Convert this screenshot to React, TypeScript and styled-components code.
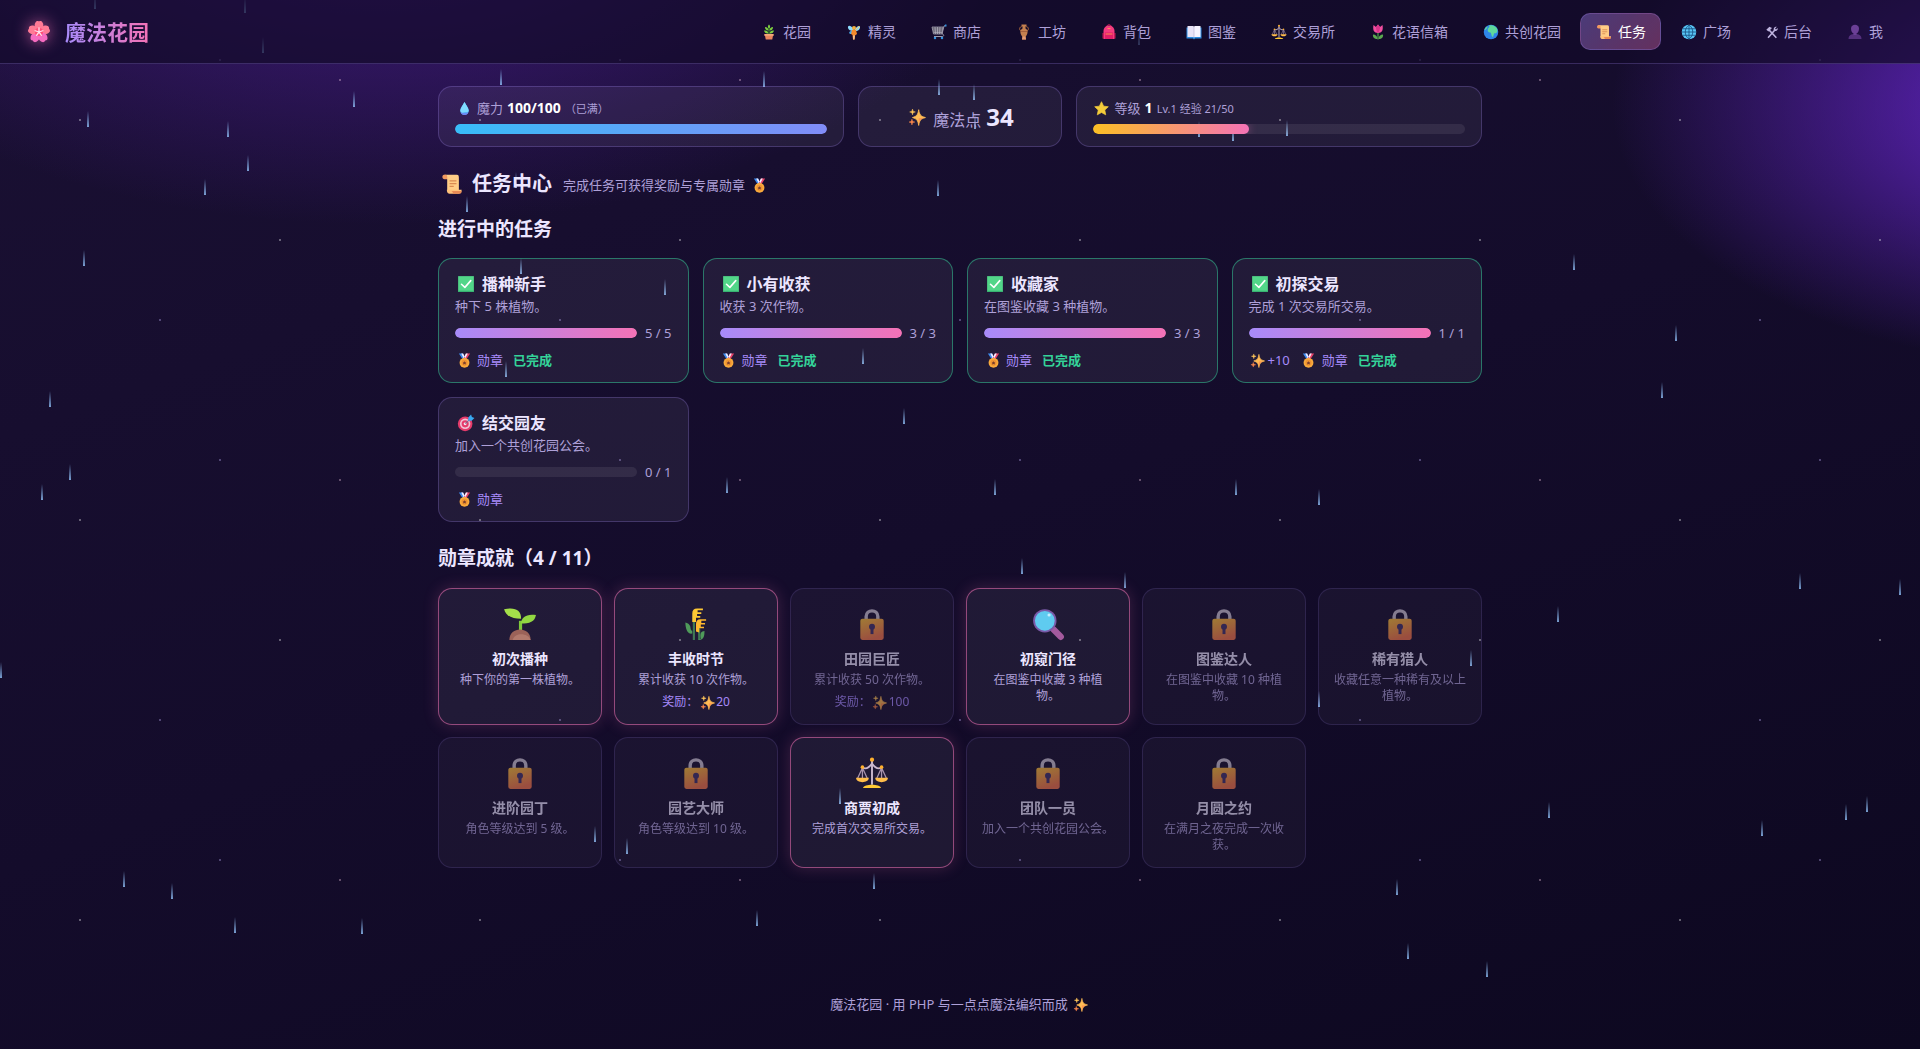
import React from "react";
import styled, { createGlobalStyle, css } from "styled-components";

const GlobalStyle = createGlobalStyle`
  *, *::before, *::after { box-sizing: border-box; }
  body {
    margin: 0;
    background: #120b28;
    color: #ece6ff;
    font-family: "Noto Sans", "Open Sans", "Noto Sans CJK SC", sans-serif;
    font-size: 13px;
    line-height: 18px;
  }
  h1, h2, h3, h4, p, ul { margin: 0; padding: 0; }
  ul { list-style: none; }
  a { color: inherit; text-decoration: none; }
`;

/* ---------- icons ---------- */

type IconName =
  | "blossom" | "plant" | "fairy" | "cart" | "amphora" | "backpack" | "book"
  | "scales" | "tulip" | "earth" | "scroll" | "mesh" | "tools" | "bust"
  | "drop" | "sparkles" | "star" | "medal" | "check" | "target"
  | "seedling" | "rice" | "lock" | "magnifier";

const petals = [0, 72, 144, 216, 288];

const art: Record<IconName, React.ReactNode> = {
  blossom: (
    <>
      {petals.map((a) => (
        <path
          key={a}
          transform={`rotate(${a} 16 16)`}
          d="M16 16C11 13 9.500 8 11.500 4.500C12.500 2.500 14 2 16 3C18 2 19.500 2.500 20.500 4.500C22.500 8 21 13 16 16Z"
          fill={a === 144 || a === 216 ? "#f56bc0" : "#ff7a95"}
        />
      ))}
      <circle cx="16" cy="16" r="5" fill="#ff4f78" />
      {petals.map((a) => (
        <path key={a} transform={`rotate(${a} 16 16)`} d="M16 16V11" stroke="#ffe1ee" strokeWidth="1.600" strokeLinecap="round" />
      ))}
    </>
  ),
  plant: (
    <>
      <path d="M16 21V8" stroke="#3f8f2e" strokeWidth="2" />
      <path d="M16 9C13 7 13 4 16 1C19 4 19 7 16 9ZM15 13C10 13 8 10 8 6C12 6 15 9 15 13ZM17 13C22 13 24 10 24 6C20 6 17 9 17 13ZM15 19C10 20 7 17 6 13C11 12 14 14 15 19ZM17 19C22 20 25 17 26 13C21 12 18 14 17 19Z" fill="#7ccf3f" />
      <path d="M7 20H25V23.500H24L22.500 31H9.500L8 23.500H7Z" fill="#e8875f" />
      <path d="M7 20H25V23.500H7Z" fill="#f5a77b" />
    </>
  ),
  fairy: (
    <>
      <path d="M15 10C9 1 3 2 4 8C5 12 9 14 14 14ZM18 10C24 1 29 3 28 8C27 13 22 14 18 14Z" fill="#8ddcff" />
      <path d="M12 14C6 14 5 18 8 20C11 21 13 18 14 16Z" fill="#4aa7e8" />
      <circle cx="16" cy="8" r="4" fill="#f6b13f" />
      <path d="M12 12H20L22 20L18 23L17 31H14L13 22L10 20Z" fill="#f58a2c" />
      <path d="M20 12L27 4" stroke="#ffc65a" strokeWidth="2" />
      <path d="M14 23H18L17 31H14Z" fill="#f2c08e" />
    </>
  ),
  cart: (
    <>
      <path d="M2 6H24L22 20H5Z" fill="#4b4758" stroke="#aaa7b5" strokeWidth="1.500" />
      <path d="M3 10H24M4 14H23M5 17H22M8 6L9 20M13 6V20M18 6L17 20" stroke="#bdbac8" strokeWidth="1.300" />
      <path d="M30 3L26 4L22 20C26 20 27 25 22 25H6" fill="none" stroke="#9d9aab" strokeWidth="2" />
      <path d="M28 1H31V5H27Z" fill="#3292df" />
      <circle cx="8" cy="28" r="2.500" fill="#3292df" />
      <circle cx="22" cy="28" r="2.500" fill="#3292df" />
    </>
  ),
  amphora: (
    <>
      <path d="M13 5C6 5 6 12 10 14M19 5C26 5 26 12 22 14" fill="none" stroke="#b26b3c" strokeWidth="2" />
      <path d="M11 1H21V4H19V9C25 12 24 20 19 26L20 31H12L13 26C8 20 7 12 13 9V4H11Z" fill="#c4804f" />
      <path d="M9 14H23V15.500H9Z" fill="#9a5637" />
      <path d="M13 25H19L20 31H12Z" fill="#e39a73" />
    </>
  ),
  backpack: (
    <>
      <path d="M12 5C12 0 20 0 20 5" fill="none" stroke="#c21a57" strokeWidth="2" />
      <path d="M5 30V14C5 -1 27 -1 27 14V30Z" fill="#f43b7f" />
      <path d="M3 18H6V29H3ZM26 18H29V29H26Z" fill="#c21a57" />
      <path d="M8 17H24V30H8Z" fill="#e01e68" />
      <path d="M9 20H23M13 9H19" stroke="#ff8e57" strokeWidth="2" />
    </>
  ),
  book: (
    <>
      <path d="M1 7H31V29H18L16 31L14 29H1Z" fill="#2c8ce0" />
      <path d="M3 4H13C15 4 16 5 16 6V27C15 26 14 26 13 26H3Z" fill="#e9e4f7" />
      <path d="M29 4H19C17 4 16 5 16 6V27C17 26 18 26 19 26H29Z" fill="#f7f4ff" />
      <path d="M16 6V27" stroke="#b5adce" strokeWidth="1.200" />
    </>
  ),
  scales: (
    <>
      <path d="M16 4V27M7 11C11 13 14 10 16 7C18 10 21 13 25 11" fill="none" stroke="#cbb9cf" strokeWidth="1.800" />
      <path d="M7 11L2.500 21M7 11V21M7 11L11.500 21M25 11L20.500 21M25 11V21M25 11L29.500 21" stroke="#a893ad" strokeWidth="1.200" />
      <path d="M1 20.500H13C13 26 1 26 1 20.500ZM19 20.500H31C31 26 19 26 19 20.500Z" fill="#ffbd4a" />
      <path d="M7.500 30C8.500 26 23.500 26 24.500 30Z" fill="#ffc933" />
      <circle cx="16" cy="3.500" r="2" fill="#ffb02e" />
      <circle cx="7" cy="10.500" r="1.700" fill="#ffb02e" />
      <circle cx="25" cy="10.500" r="1.700" fill="#ffb02e" />
    </>
  ),
  tulip: (
    <>
      <path d="M16 16V31" stroke="#4c9a4a" strokeWidth="2.500" />
      <path d="M15 30C8 30 5 26 6 21C11 21 15 24 15 30ZM17 30C24 30 27 26 26 21C21 21 17 24 17 30Z" fill="#5aa84f" />
      <path d="M7 2L12 6L16 1L20 6L25 2C27 12 24 18 16 18C8 18 5 12 7 2Z" fill="#f04fa0" />
      <path d="M12 6L16 1L20 6C20 12 18 16 16 18C14 16 12 12 12 6Z" fill="#d9338a" />
    </>
  ),
  earth: (
    <>
      <circle cx="16" cy="16" r="14.500" fill="#2f86e8" />
      <path d="M12 3C18 1 25 4 28 9C30 14 28 18 25 19C22 16 22 22 20 26C17 26 17 20 15 17C11 17 8 14 10 9C12 7 14 6 12 3Z" fill="#5fd99b" />
      <path d="M4 9C6 6 8 5 9 5C9 8 6 12 3 12Z" fill="#5fd99b" />
    </>
  ),
  scroll: (
    <>
      <path d="M2 5.500C2 1 10 1 10 6V9H5C3 9 2 7.500 2 5.500Z" fill="#f29a5f" />
      <path d="M6 2.500H23C26 2.500 26 5 26 8V26H9V7C9 5 9 2.500 6 2.500Z" fill="#ffcd86" />
      <path d="M12 24.500H30C30 28 29 30 26 30H12C9 30 8.500 27 8.500 24.500Z" fill="#ffc27a" />
      <path d="M15 26H30C30 29 29 30 26 30H17C18 29 17 27 15 26Z" fill="#e88a55" />
      <path d="M12.500 11.500H22.500M12.500 15.500H22.500M12.500 19.500H18.500" stroke="#d98a52" strokeWidth="1.700" />
    </>
  ),
  mesh: (
    <>
      <circle cx="16" cy="16" r="14.500" fill="#58c5f5" />
      <path d="M2 16H30M4 9.500H28M4 22.500H28M16 2V30M16 2C6 9 6 23 16 30M16 2C26 9 26 23 16 30" fill="none" stroke="#164b7d" strokeWidth="1.600" />
    </>
  ),
  tools: (
    <>
      <path d="M8 10L26 29" stroke="#bfb4e0" strokeWidth="3.500" />
      <path d="M3 11L10 4L16 7L8 15Z" fill="#bfb4e0" />
      <path d="M7 29L22 12" stroke="#bfb4e0" strokeWidth="3.500" />
      <path d="M27 4L23 8L25 10L29 7C30 12 26 15 21 13C18 9 21 3 27 4Z" fill="#bfb4e0" />
    </>
  ),
  bust: (
    <>
      <path d="M3 30C3 22 9 20 16 20C23 20 29 22 29 30Z" fill="#54307d" />
      <path d="M8 9C8 -1 24 -1 24 9C24 15 21 18 19 19V22H13V19C11 18 8 15 8 9Z" fill="#6b3f96" />
    </>
  ),
  drop: (
    <>
      <path d="M16 2C20 10 25 15 25 21C25 33 7 33 7 21C7 15 12 10 16 2Z" fill="#55b4f7" />
      <path d="M16 2C20 10 25 15 25 21C25 25 20 22 15 24C11 26 8 25 7 21C7 15 12 10 16 2Z" fill="#7fdcff" />
      <path d="M8 24C13 27 20 27 24 24C22 32 10 32 8 24Z" fill="#6f86f2" />
    </>
  ),
  sparkles: (
    <>
      <path d="M19 3C20.500 12 22 14.500 31 17C22 19.500 20.500 22 19 31C17.500 22 16 19.500 8 17C16 14.500 17.500 12 19 3Z" fill="#ffbc55" stroke="#ffbc55" strokeWidth="1.500" strokeLinejoin="round" />
      <path d="M19 18L29 17.500C22 19.500 20.500 22 19 31Z" fill="#ff9450" />
      <path d="M8 2C8.600 5.500 9.500 6.400 13 7C9.500 7.600 8.600 8.500 8 12C7.400 8.500 6.500 7.600 3 7C6.500 6.400 7.400 5.500 8 2Z" fill="#ffc65a" stroke="#ffc65a" />
      <path d="M7 20C7.600 23.500 8.500 24.400 12 25C8.500 25.600 7.600 26.500 7 30C6.400 26.500 5.500 25.600 2 25C5.500 24.400 6.400 23.500 7 20Z" fill="#ff8a4d" stroke="#ff8a4d" />
    </>
  ),
  star: (
    <path d="M16 1.500L20.500 11L30.500 12.200L23 19.300L25 29.500L16 24.500L7 29.500L9 19.300L1.500 12.200L11.500 11Z" fill="#f4cc3a" stroke="#f4cc3a" strokeWidth="1.500" strokeLinejoin="round" />
  ),
  medal: (
    <>
      <path d="M4 1H13L18 12L13 15Z" fill="#3f8df0" />
      <path d="M28 1H19L14 12L19 15Z" fill="#e8436b" />
      <path d="M9 1H13L18 11L15 13ZM23 1H19L15 9L17 13Z" fill="#f3ecff" />
      <circle cx="16" cy="21" r="10.500" fill="#f9aa3c" />
      <circle cx="16" cy="21" r="6.500" fill="#ee9232" />
      <path d="M16 17.500L17.500 19.500L19.500 20L18.500 22L19 24.500L16 23.500L13 24.500L13.500 22L12.500 20L14.500 19.500Z" fill="#7b3f2c" />
    </>
  ),
  check: (
    <>
      <path d="M2 2H30V30H2Z" fill="#52d689" />
      <path d="M2 28H30V30H2Z" fill="#36b070" />
      <path d="M8 16.500L14 22L24.500 10" fill="none" stroke="#fff" strokeWidth="2.800" strokeLinecap="round" strokeLinejoin="round" />
    </>
  ),
  target: (
    <>
      <circle cx="14.500" cy="17.500" r="13" fill="#e63b6b" />
      <circle cx="14.500" cy="17.500" r="9.300" fill="#f0c4d6" />
      <circle cx="14.500" cy="17.500" r="6.300" fill="#e63b6b" />
      <circle cx="14.500" cy="17.500" r="2.600" fill="#f3e6f2" />
      <path d="M15 17L24 8" stroke="#7a6a8c" strokeWidth="1.800" />
      <path d="M20 11V6L25 1L26.500 5.500L31 7L26 12H21Z" fill="#38a8f0" />
    </>
  ),
  seedling: (
    <>
      <path d="M15 27V13H18V27Z" fill="#7fc93a" />
      <path d="M1 2C12 0 17 3 17 11C9 11 3 9 1 2Z" fill="#a4e04a" />
      <path d="M31 7.500C22 6 17 10 17 15.500C25 15.500 30 14 31 7.500Z" fill="#92d742" />
      <path d="M6 31C6 18 26 18 26 31Z" fill="#9b6259" />
      <path d="M9 31C12 23 24 25 26 31Z" fill="#b1796d" />
    </>
  ),
  rice: (
    <>
      <path d="M14 31V9M19 31V20" stroke="#3f7a55" strokeWidth="2" />
      <path d="M12.500 25C8 26 6 20 6 14.500C10 15.500 11 18 11 21L12.500 23ZM20.500 30C19.500 24 21 23 24 22.500C24 28 23 31 18 31Z" fill="#4f9a5a" />
      <path d="M12.500 14V6C12.500 3 14 1.500 17 1.500H22.500V3H17.500V5H21V6.500H17V8.500H20V10H16V14Z" fill="#ffc934" />
      <path d="M16 23V16C16 13 17.500 11.500 20 11.500H25.500V13H21V15H24.500V16.500H20.500V18.500H23.500V20H19V24Z" fill="#ffb92e" />
    </>
  ),
  lock: (
    <>
      <path d="M10.500 13V9C10.500 1.800 21.500 1.800 21.500 9V13" fill="none" stroke="#d0c8d6" strokeWidth="3.200" />
      <rect x="5" y="11" width="22" height="20" rx="2" fill="url(#lockBody)" />
      <circle cx="16" cy="18.500" r="2.800" fill="#4a3a6e" />
      <path d="M14.600 19H17.400V25.500H14.600Z" fill="#4a3a6e" />
    </>
  ),
  magnifier: (
    <>
      <path d="M21 21L28 28" stroke="#a45a9e" strokeWidth="6" strokeLinecap="round" />
      <circle cx="13" cy="13" r="11" fill="#7a5aa8" />
      <circle cx="13" cy="13" r="9.300" fill="#5fcbf0" />
      <circle cx="17" cy="7.500" r="1.500" fill="#c6efff" />
    </>
  ),
};

const IconSlot = styled.span<{ $slot: number }>`
  display: inline-flex;
  flex: none;
  justify-content: center;
  align-items: center;
  width: ${(p) => p.$slot}px;
  svg { display: block; overflow: visible; }
`;

function Icon({ name, size, slot }: { name: IconName; size: number; slot: number }) {
  return (
    <IconSlot $slot={slot} aria-hidden="true">
      <svg width={size} height={size} viewBox="0 0 32 32">{art[name]}</svg>
    </IconSlot>
  );
}

/* ---------- page backdrop ---------- */

const Page = styled.div`
  position: relative;
  isolation: isolate;
  display: flex;
  flex-direction: column;
  min-height: 100vh;
  background:
    radial-gradient(500px 265px at 110% 10%, #6d28d9, rgba(109, 40, 217, 0) 100%),
    radial-gradient(640px 330px at 20% -10%, rgba(76, 29, 149, 0.85), rgba(76, 29, 149, 0) 100%),
    linear-gradient(160deg, #1a1033 0%, #140c2b 50%, #0d0820 100%);
`;

const Sky = styled.div`
  position: absolute;
  inset: 0;
  z-index: -1;
  overflow: hidden;
  pointer-events: none;
`;

const dot = (x: number, y: number, color: string) =>
  `radial-gradient(circle at ${x}px ${y}px, ${color} 1px, transparent 1px)`;

const Stars = styled.div`
  position: absolute;
  inset: 0 0 20px;
  opacity: 0.34;
  background-image:
    ${dot(80, 120, "#ffffff")},
    ${dot(160, 320, "#c4b5fd")},
    ${dot(220, 60, "#c4b5fd")},
    ${dot(280, 240, "#ffffff")},
    ${dot(340, 80, "#fbcfe8")};
  background-size: 400px 400px;
`;

const Drop = styled.i`
  position: absolute;
  width: 2px;
  height: 16px;
  background: linear-gradient(to bottom, rgba(147, 197, 253, 0), rgba(147, 197, 253, 0.8));
`;

const drops: [number, number][] = [
  [94, -7], [244, -3], [262, 37], [353, 91], [500, 69], [87, 111], [227, 121], [247, 155],
  [204, 179], [466, 196], [763, 71], [938, 79], [973, 84], [974, 113], [937, 180], [1198, 121],
  [1232, 125], [1286, 120], [1138, 29], [515, 172], [83, 250], [520, 258], [664, 279], [862, 348], [505, 361],
  [49, 391], [903, 408], [69, 464], [41, 484], [726, 477], [994, 479], [1235, 479], [1318, 489],
  [1573, 254], [1675, 325], [1661, 382], [1021, 558], [1124, 572], [1799, 573], [1899, 579],
  [1557, 606], [0, 662], [1470, 650], [1318, 691], [839, 788], [594, 826], [626, 838], [873, 873],
  [123, 871], [171, 883], [234, 917], [361, 918], [756, 910], [1548, 802], [1396, 879],
  [1407, 943], [1486, 961], [1761, 820], [1845, 804], [1866, 796],
];

/* ---------- header ---------- */

const Header = styled.header`
  display: flex;
  align-items: center;
  justify-content: space-between;
  height: 64px;
  padding: 0 22px;
  background: rgba(18, 10, 42, 0.7);
  border-bottom: 1px solid rgba(167, 139, 250, 0.25);
`;

const Brand = styled.a`
  display: flex;
  align-items: center;
  gap: 10px;
  font-size: 21px;
  line-height: 30px;
  font-weight: 700;
  svg { filter: drop-shadow(0 0 8px rgba(244, 114, 182, 0.7)); }
`;

const BrandName = styled.span`
  background: linear-gradient(90deg, #a78bfa, #f472b6);
  background-clip: text;
  -webkit-background-clip: text;
  color: transparent;
`;

const Nav = styled.nav`
  display: flex;
  gap: 4px;
`;

const NavLink = styled.a<{ $active?: boolean }>`
  display: flex;
  align-items: center;
  gap: 5px;
  height: 37px;
  padding: 0 14px;
  border: 1px solid transparent;
  border-radius: 10px;
  color: #aea0d8;
  font-size: 14px;
  white-space: nowrap;
  ${(p) =>
    p.$active &&
    css`
      color: #ffffff;
      border-color: rgba(167, 139, 250, 0.25);
      background: linear-gradient(135deg, rgba(167, 139, 250, 0.38), rgba(244, 114, 182, 0.36));
    `}
`;

/* ---------- shared pieces ---------- */

const Main = styled.main`
  width: 100%;
  max-width: 1100px;
  margin: 0 auto;
  padding: 22px 28px 0;
`;

const panel = css`
  background: rgba(255, 255, 255, 0.06);
  border: 1px solid rgba(167, 139, 250, 0.25);
  border-radius: 14px;
`;

const Track = styled.div`
  flex: 1;
  height: 10px;
  border-radius: 5px;
  overflow: hidden;
  background: rgba(255, 255, 255, 0.08);
`;

const fills = {
  mana: "linear-gradient(90deg, #38bdf8, #818cf8)",
  xp: "linear-gradient(90deg, #fbbf24, #f472b6)",
  task: "linear-gradient(90deg, #a78bfa, #f472b6)",
};

const Fill = styled.div<{ $tone: keyof typeof fills }>`
  height: 100%;
  border-radius: 5px;
  background: ${(p) => fills[p.$tone]};
  box-shadow: 0 0 10px rgba(244, 114, 182, 0.4);
`;

function Bar({ value, max, tone, label }: { value: number; max: number; tone: keyof typeof fills; label: string }) {
  return (
    <Track role="progressbar" aria-label={label} aria-valuenow={value} aria-valuemax={max}>
      {value > 0 && <Fill $tone={tone} style={{ width: `${(value / max) * 100}%` }} />}
    </Track>
  );
}

/* ---------- stats ---------- */

const Stats = styled.section`
  display: grid;
  grid-template-columns: 2fr 1fr 2fr;
  gap: 14px;
`;

const Stat = styled.div`
  ${panel}
  padding: 12px 16px;
`;

const StatLine = styled.div`
  display: flex;
  align-items: baseline;
  gap: 4px;
  height: 18px;
  margin-bottom: 7px;
  color: #aea0d8;
  ${IconSlot} { align-self: center; }
  strong { color: #ffffff; font-size: 14px; }
  small { font-size: 11px; }
`;

const Points = styled(Stat)`
  display: flex;
  align-items: center;
  justify-content: center;
`;

const PointsLine = styled.p`
  display: flex;
  align-items: baseline;
  gap: 5px;
  color: #aea0d8;
  font-size: 16px;
  ${IconSlot} { align-self: center; }
  strong { color: #ece6ff; font-size: 24px; line-height: 32px; }
`;

/* ---------- headings ---------- */

const TitleRow = styled.div`
  display: flex;
  align-items: center;
  gap: 11px;
  margin-top: 22px;
  padding-bottom: 2px;
  color: #aea0d8;
`;

const PageTitle = styled.h1`
  display: flex;
  align-items: center;
  gap: 6px;
  color: #ece6ff;
  font-size: 20px;
  line-height: 29px;
`;

const Hint = styled.p`
  display: flex;
  align-items: center;
  gap: 5px;
  padding-top: 3px;
`;

const SectionTitle = styled.h2`
  margin: 16px 0;
  font-size: 19px;
  line-height: 26px;
`;

const BadgeTitle = styled(SectionTitle)`
  margin: 23px 0 17px;
`;

/* ---------- tasks ---------- */

const TaskGrid = styled.ul`
  display: grid;
  grid-template-columns: repeat(4, 1fr);
  gap: 14px;
`;

const TaskCard = styled.li<{ $done: boolean }>`
  ${panel}
  padding: 14px 16px;
  ${(p) => p.$done && "border-color: rgba(52, 211, 153, 0.5);"}
`;

const TaskName = styled.h3`
  display: flex;
  align-items: center;
  gap: 5px;
  font-size: 16px;
  line-height: 22px;
`;

const TaskText = styled.p`
  margin-top: 2px;
  color: #aea0d8;
`;

const TaskProgress = styled.div`
  display: flex;
  align-items: center;
  gap: 8px;
  margin-top: 9px;
  color: #aea0d8;
`;

const Rewards = styled.div`
  display: flex;
  align-items: center;
  gap: 10px;
  height: 16px;
  margin-top: 10px;
  color: #a78bfa;
`;

const Reward = styled.span<{ $tight?: boolean }>`
  display: flex;
  align-items: center;
  gap: ${(p) => (p.$tight ? 1 : 4)}px;
`;

const Done = styled.strong`
  color: #34d399;
`;

const tasks = [
  { name: "播种新手", text: "种下 5 株植物。", value: 5, max: 5, points: 0 },
  { name: "小有收获", text: "收获 3 次作物。", value: 3, max: 3, points: 0 },
  { name: "收藏家", text: "在图鉴收藏 3 种植物。", value: 3, max: 3, points: 0 },
  { name: "初探交易", text: "完成 1 次交易所交易。", value: 1, max: 1, points: 10 },
  { name: "结交园友", text: "加入一个共创花园公会。", value: 0, max: 1, points: 0 },
];

/* ---------- badges ---------- */

const BadgeGrid = styled.ul`
  display: grid;
  grid-template-columns: repeat(6, 1fr);
  gap: 12px;
`;

const BadgeCard = styled.li<{ $earned: boolean }>`
  ${panel}
  display: flex;
  flex-direction: column;
  align-items: center;
  padding: 14px 15px;
  text-align: center;
  ${(p) =>
    p.$earned
      ? "border-color: rgba(244, 114, 182, 0.55); box-shadow: 0 0 16px rgba(244, 114, 182, 0.2);"
      : "opacity: 0.6;"}
`;

const BadgeArt = styled.div`
  display: flex;
  align-items: center;
  height: 42px;
`;

const BadgeName = styled.h3`
  margin-top: 4px;
  font-size: 14px;
  line-height: 19px;
`;

const BadgeText = styled.p`
  margin-top: 4px;
  color: #aea0d8;
  font-size: 12px;
  line-height: 16px;
`;

const BadgeReward = styled.p`
  display: flex;
  align-items: center;
  margin-top: 6px;
  color: #a78bfa;
  font-size: 12px;
  line-height: 16px;
`;

const badges: { name: string; text: string; icon?: IconName; points?: number }[] = [
  { name: "初次播种", text: "种下你的第一株植物。", icon: "seedling" },
  { name: "丰收时节", text: "累计收获 10 次作物。", icon: "rice", points: 20 },
  { name: "田园巨匠", text: "累计收获 50 次作物。", points: 100 },
  { name: "初窥门径", text: "在图鉴中收藏 3 种植物。", icon: "magnifier" },
  { name: "图鉴达人", text: "在图鉴中收藏 10 种植物。" },
  { name: "稀有猎人", text: "收藏任意一种稀有及以上植物。" },
  { name: "进阶园丁", text: "角色等级达到 5 级。" },
  { name: "园艺大师", text: "角色等级达到 10 级。" },
  { name: "商贾初成", text: "完成首次交易所交易。", icon: "scales" },
  { name: "团队一员", text: "加入一个共创花园公会。" },
  { name: "月圆之约", text: "在满月之夜完成一次收获。" },
];

const Footer = styled.footer`
  display: flex;
  align-items: center;
  justify-content: center;
  gap: 4px;
  margin-top: auto;
  padding: 36px 28px;
  color: #aea0d8;
`;

const Defs = styled.svg`
  position: absolute;
  width: 0;
  height: 0;
`;

const navItems: { label: string; icon: IconName; slot?: number }[] = [
  { label: "花园", icon: "plant" },
  { label: "精灵", icon: "fairy" },
  { label: "商店", icon: "cart" },
  { label: "工坊", icon: "amphora" },
  { label: "背包", icon: "backpack" },
  { label: "图鉴", icon: "book" },
  { label: "交易所", icon: "scales" },
  { label: "花语信箱", icon: "tulip" },
  { label: "共创花园", icon: "earth" },
  { label: "任务", icon: "scroll" },
  { label: "广场", icon: "mesh" },
  { label: "后台", icon: "tools", slot: 14 },
  { label: "我", icon: "bust" },
];

export default function App() {
  const earned = badges.filter((b) => b.icon).length;
  return (
    <Page>
      <GlobalStyle />
      <Defs aria-hidden="true">
        <linearGradient id="lockBody" x1="0" y1="0" x2="0.4" y2="1">
          <stop offset="0" stopColor="#ffc63d" />
          <stop offset="1" stopColor="#f57a4f" />
        </linearGradient>
      </Defs>
      <Sky aria-hidden="true">
        <Stars />
        {drops.map(([x, y]) => (
          <Drop key={`${x}-${y}`} style={{ left: x, top: y }} />
        ))}
      </Sky>

      <Header>
        <Brand href="#">
          <Icon name="blossom" size={26} slot={33} />
          <BrandName>魔法花园</BrandName>
        </Brand>
        <Nav>
          {navItems.map((n) => (
            <NavLink key={n.label} href="#" $active={n.label === "任务"}>
              <Icon name={n.icon} size={n.slot ?? 16} slot={n.slot ?? 18} />
              {n.label}
            </NavLink>
          ))}
        </Nav>
      </Header>

      <Main>
        <Stats>
          <Stat>
            <StatLine>
              <Icon name="drop" size={15} slot={18} />
              魔力 <strong>100/100</strong>
              <small>（已满）</small>
            </StatLine>
            <Bar value={100} max={100} tone="mana" label="魔力" />
          </Stat>
          <Points>
            <PointsLine>
              <Icon name="sparkles" size={18} slot={22} />
              魔法点 <strong>34</strong>
            </PointsLine>
          </Points>
          <Stat>
            <StatLine>
              <Icon name="star" size={15} slot={18} />
              等级 <strong>1</strong>
              <small>Lv.1 经验 21/50</small>
            </StatLine>
            <Bar value={21} max={50} tone="xp" label="等级" />
          </Stat>
        </Stats>

        <TitleRow>
          <PageTitle>
            <Icon name="scroll" size={22} slot={28} />
            任务中心
          </PageTitle>
          <Hint>
            完成任务可获得奖励与专属勋章
            <Icon name="medal" size={15} slot={18} />
          </Hint>
        </TitleRow>

        <SectionTitle>进行中的任务</SectionTitle>
        <TaskGrid>
          {tasks.map((t) => {
            const done = t.value >= t.max;
            return (
              <TaskCard key={t.name} $done={done}>
                <TaskName>
                  <Icon name={done ? "check" : "target"} size={18} slot={22} />
                  {t.name}
                </TaskName>
                <TaskText>{t.text}</TaskText>
                <TaskProgress>
                  <Bar value={t.value} max={t.max} tone="task" label={t.name} />
                  {t.value} / {t.max}
                </TaskProgress>
                <Rewards>
                  {t.points > 0 && (
                    <Reward $tight>
                      <Icon name="sparkles" size={15} slot={18} />+{t.points}
                    </Reward>
                  )}
                  <Reward>
                    <Icon name="medal" size={15} slot={18} />
                    勋章
                  </Reward>
                  {done && <Done>已完成</Done>}
                </Rewards>
              </TaskCard>
            );
          })}
        </TaskGrid>

        <BadgeTitle>
          勋章成就（{earned} / {badges.length}）
        </BadgeTitle>
        <BadgeGrid>
          {badges.map((b) => (
            <BadgeCard key={b.name} $earned={!!b.icon}>
              <BadgeArt>
                <Icon name={b.icon ?? "lock"} size={34} slot={44} />
              </BadgeArt>
              <BadgeName>{b.name}</BadgeName>
              <BadgeText>{b.text}</BadgeText>
              {b.points && (
                <BadgeReward>
                  奖励：
                  <Icon name="sparkles" size={15} slot={18} />
                  {b.points}
                </BadgeReward>
              )}
            </BadgeCard>
          ))}
        </BadgeGrid>
      </Main>

      <Footer>
        魔法花园 · 用 PHP 与一点点魔法编织而成
        <Icon name="sparkles" size={15} slot={18} />
      </Footer>
    </Page>
  );
}
